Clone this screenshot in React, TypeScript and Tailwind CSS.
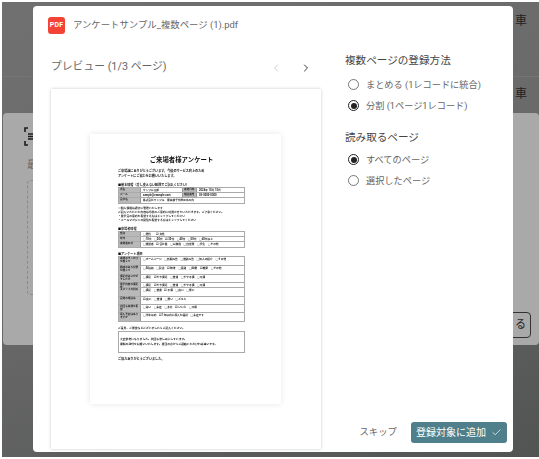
import { Check, ChevronLeft, ChevronRight } from "lucide-react";

const FONT = "font-['Roboto','Noto_Sans_CJK_JP',sans-serif]";

function Radio({ label, checked }: { label: string; checked?: boolean }) {
  return (
    <div className="flex h-[21px] items-center gap-[7px]">
      <span
        className={`flex size-[11px] items-center justify-center rounded-full border ${checked ? "border-[#222]" : "border-[#777]"}`}
      >
        {checked ? <span className="size-[6px] rounded-full bg-[#222]" /> : null}
      </span>
      <span className="text-[9.2px] text-[#666]">{label}</span>
    </div>
  );
}

type DocRow = { label: string; cells: string; h: string; midLabel?: string; midCell?: string };

function DocTable({ rows }: { rows: DocRow[] }) {
  return (
    <div className="border border-[#aaa]">
      {rows.map((row, i) => (
        <div key={i} className={`flex border-b border-[#aaa] last:border-b-0 ${row.h}`}>
          <div className="w-[22px] shrink-0 border-r border-[#999] bg-[#b9b9b9] px-[1px] text-[2.6px] leading-[3.4px] font-bold text-[#222]">
            {row.label}
          </div>
          <div className={`px-[2px] text-[2.7px] leading-[4px] font-bold whitespace-nowrap text-[#222] ${row.midLabel ? "w-[41px] shrink-0" : ""}`}>
            {row.cells}
          </div>
          {row.midLabel ? (
            <>
              <div className="w-[15px] shrink-0 border-x border-[#999] bg-[#b9b9b9] px-[1px] text-[2.6px] leading-[3.4px] font-bold text-[#222]">
                {row.midLabel}
              </div>
              <div className="px-[2px] text-[2.7px] leading-[4px] font-bold whitespace-nowrap text-[#222]">{row.midCell}</div>
            </>
          ) : null}
        </div>
      ))}
    </div>
  );
}

function SurveyPage() {
  return (
    <div className="h-[270px] w-[191px] bg-white pt-[22px] pr-[36px] pl-[28px] shadow-[0_0_6px_rgba(0,0,0,0.1)] blur-[0.35px]">
      <div className="text-center text-[6.4px] leading-[9px] font-bold whitespace-nowrap text-[#111]">ご来場者様アンケート</div>
      <div className="mt-[4px] text-[3.1px] leading-[5px] font-bold whitespace-nowrap text-[#111]">
        <div>ご来場誠にありがとうございます。今後のサービス向上のため</div>
        <div>アンケートにご協力をお願いいたします。</div>
      </div>
      <div className="mt-[4px] text-[3.1px] leading-[4px] font-bold whitespace-nowrap text-[#111]">■基本情報（差し支えない範囲でご記入ください）</div>
      <DocTable
        rows={[
          { label: "氏名", cells: "サンプル太郎", h: "h-[5px]", midLabel: "来場日時", midCell: "2024年 10月 15日" },
          { label: "メール", cells: "sample@example.com", h: "h-[5px]", midLabel: "電話番号", midCell: "03-0000-0000" },
          { label: "会社名", cells: "株式会社サンプル　東京都千代田区丸の内", h: "h-[5px]" },
        ]}
      />
      <div className="mt-[2px] text-[2.8px] leading-[4px] font-bold whitespace-nowrap text-[#222]">
        <div>※個人情報は適切に管理いたします</div>
        <div>ご記入いただいた内容は今後のご案内に利用させていただきます。ご了承ください。</div>
        <div>・展示会の案内を希望する方はチェックしてください</div>
        <div>・メールマガジンの配信を希望する方はチェックしてください</div>
      </div>
      <div className="mt-[5px] text-[3.1px] leading-[4px] font-bold text-[#111]">■来場者情報</div>
      <DocTable
        rows={[
          { label: "性別", cells: "□男性　　☑女性", h: "h-[5px]" },
          { label: "年代", cells: "□10代　□20代　☑30代　□40代　□50代　□60代以上", h: "h-[5px]" },
          { label: "来場者区分", cells: "□経営者　☑会社員　□公務員　□自営業　□学生　□その他", h: "h-[5px]" },
        ]}
      />
      <div className="mt-[4px] text-[3.1px] leading-[4px] font-bold text-[#111]">■アンケート項目</div>
      <DocTable
        rows={[
          { label: "来場のきっかけを教えて", cells: "□ホームページ　□新聞広告　□雑誌広告　□知人の紹介　□その他", h: "h-[9px]" },
          { label: "興味のある分野を教えて", cells: "□AI技術　□製造　☑物流　□金融　□医療　☑教育　□その他", h: "h-[9px]" },
          { label: "満足度はいかがでしたか", cells: "□満足　☑やや満足　□普通　□やや不満　□不満", h: "h-[8px]" },
          { label: "展示内容の満足度", cells: "□満足　☑やや満足　□普通　□やや不満　□不満", h: "h-[5px]" },
          { label: "スタッフの対応", cells: "□満足　□普通　☑不満　□良い　□悪い", h: "h-[9px]" },
          { label: "会場の場所は", cells: "☑良い　□普通　□悪い　□どちら", h: "h-[8px]" },
          { label: "次回も来場を希望", cells: "□はい　□未定　□多分　☑いいえ　□不明", h: "h-[8px]" },
          { label: "導入予定はありますか", cells: "□半年以内　☑1年以内に導入を検討　□未定です", h: "h-[8px]" },
        ]}
      />
      <div className="mt-[4px] text-[2.8px] leading-[4px] font-bold whitespace-nowrap text-[#222]">ご意見、ご要望などございましたらご記入ください。</div>
      <div className="mt-[1px] flex h-[22px] flex-col justify-center border border-[#aaa] px-[1px] text-[2.8px] leading-[5px] font-bold whitespace-nowrap text-[#111]">
        <div>大変参考になりました。次回も楽しみにしています。</div>
        <div>資料の送付をお願いいたします。担当の方からご連絡いただければ幸いです。</div>
      </div>
      <div className="mt-[4px] text-[3.1px] leading-[4px] font-bold text-[#111]">ご協力ありがとうございました。</div>
    </div>
  );
}

export default function App() {
  return (
    <div className={`relative h-[459px] w-[539px] overflow-hidden bg-white ${FONT}`}>
      {/* page behind the dialog */}
      <div className="ml-[2px] mt-[2px] h-[455px] bg-[linear-gradient(160deg,#707070,#6a6a6a_45%,#525453)]">
        <div className="flex h-[75px] justify-end border-b border-[#757575] pt-[10px] pr-[12px] text-[12px] text-[#222]">車</div>
        <div className="flex h-[36px] justify-end pt-[8px] pr-[12px] text-[12px] text-[#222]">車</div>
        <div className="ml-[1px] h-[232px] rounded-[4px] bg-[#a9a9a9] pt-[14px] pl-[20px]">
          <svg width="11" height="19" viewBox="0 0 11 19" fill="none" stroke="#1c1c1c" strokeWidth="1.6">
            <path d="M5 1H2v4M2 14v4h3" />
            <path d="M5 7h6M5 9.5h6M5 12h6" />
          </svg>
          <div className="mt-[13px] ml-[4px] text-[10px] leading-[12px] text-[#666]">最</div>
          <div className="mt-[9px] ml-[4px] h-[115px] w-[60px] rounded-[4px] border border-dashed border-[#8a8a8a]" />
          <div className="absolute top-[312px] right-[8px] flex h-[26px] w-[40px] items-center justify-end rounded-[4px] border border-[#333] pr-[4px] text-[11px] text-[#222]">
            る
          </div>
        </div>
      </div>

      {/* dialog */}
      <div className="absolute top-[6px] left-[33px] flex h-[446px] w-[480px] flex-col rounded-[4px] bg-white">
        <div className="flex h-[36px] items-center gap-[8px] pt-[2px] pl-[15px]">
          <span className="flex size-[17px] items-center justify-center rounded-[3px] bg-[#f44336] text-[7px] font-bold tracking-[0.2px] text-white">PDF</span>
          <span className="text-[9.4px] text-[#666]">アンケートサンプル_複数ページ (1).pdf</span>
        </div>
        <div className="flex min-h-0 flex-1 pl-[18px]">
          <div className="w-[270px]">
            <div className="flex h-[47px] items-center justify-between pt-[4px]">
              <span className="text-[10.8px] text-[#666]">プレビュー (1/3 ページ)</span>
              <div className="mr-[9px] flex items-center gap-[18px]">
                <ChevronLeft size={12} className="text-[#ccc]" />
                <ChevronRight size={12} className="text-[#333]" />
              </div>
            </div>
            <div className="flex h-[360px] justify-center bg-white pt-[45px] pr-[1px] shadow-[0_0_3px_rgba(0,0,0,0.22)]">
              <SurveyPage />
            </div>
          </div>
          <div className="flex w-[192px] flex-col pl-[24px]">
            <div className="mt-[10px] text-[10.6px] leading-[18px] text-[#444]">複数ページの登録方法</div>
            <div className="mt-[4px] ml-[3px]">
              <Radio label="まとめる (1レコードに統合)" />
              <Radio label="分割 (1ページ1レコード)" checked />
            </div>
            <div className="mt-[13px] text-[10.6px] leading-[18px] text-[#444]">読み取るページ</div>
            <div className="mt-[2px] ml-[3px]">
              <Radio label="すべてのページ" checked />
              <Radio label="選択したページ" />
            </div>
            <div className="mt-auto mr-[6px] mb-[9px] flex items-center justify-end gap-[14px]">
              <span className="text-[9.4px] text-[#666]">スキップ</span>
              <span className="flex h-[21px] w-[96px] items-center justify-center gap-[5px] rounded-[3px] bg-[#4e7f8a] text-[10px] text-white">
                登録対象に追加
                <Check size={11} strokeWidth={1.5} />
              </span>
            </div>
          </div>
        </div>
      </div>
    </div>
  );
}
